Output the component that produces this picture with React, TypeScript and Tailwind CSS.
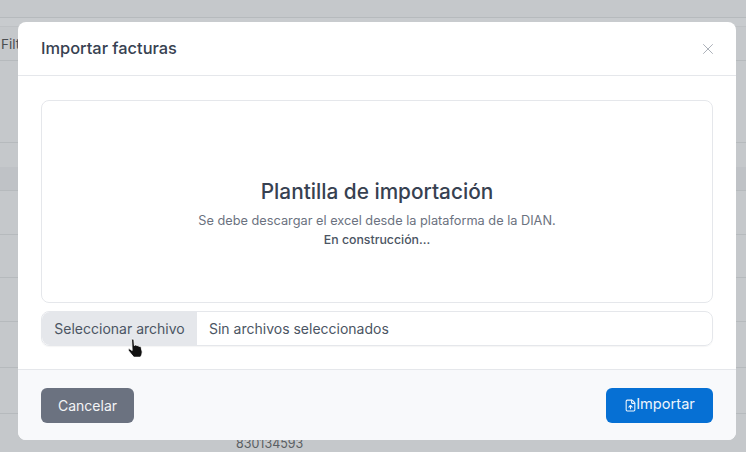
import { FileUp, X } from "lucide-react";

const rows = [
  { h: 18 },
  { h: 9, faint: true },
  { h: 34, label: "Filtros" },
  { h: 82 },
  { h: 48, shaded: true },
  { h: 44 },
  { h: 43 },
  { h: 44 },
  { h: 46 },
  { h: 46 },
];

function HandCursor() {
  return (
    <svg width="17" height="19" viewBox="1 0 14 17" className="absolute left-[85px] top-[26px]">
      <path
        d="M4.500 1.800c0-1.200 2-1.200 2.100 0l.4 5 .5-.4c.9-.5 1.600-.1 1.800.6.800-.5 1.600-.2 1.800.6.800-.4 1.700-.1 1.900.7l.9 3.500c.3 2-.5 3.900-1.500 5.400H6.500L1.800 11.500c-.9-1.100.1-2.300 1.300-1.600L5 11.200z"
        fill="#111"
        stroke="#fff"
        strokeWidth="0.8"
        strokeLinejoin="round"
      />
    </svg>
  );
}

export default function App() {
  return (
    <div className="relative h-[452px] w-[746px] overflow-hidden bg-[#c5c8cb] font-['Inter',sans-serif]">
      <div className="flex flex-col">
        {rows.map((r, i) => (
          <div
            key={i}
            style={{ height: r.h }}
            className={`border-b ${r.faint ? "border-[#bec1c4] bg-[#c8cbce]" : "border-[#b6babd]"}`}
          >
            {r.shaded && <div className="mt-[24px] h-[23px] bg-[#bfc2c6]" />}
            {r.label && <span className="ml-[1px] text-[13.500px] leading-[34px] text-[#4a4e52]">{r.label}</span>}
          </div>
        ))}
        <div className="mt-[23px] pl-[236px] text-[12.500px] leading-[14px] text-[#5b5f63]">830134593</div>
      </div>

      <div className="absolute inset-0 pl-[18px] pt-[22px]">
        <div className="flex h-[418px] w-[718px] flex-col overflow-hidden rounded-lg bg-white">
          <div className="flex h-[54px] items-center justify-between border-b border-[#e5e7eb] px-[23px]">
            <h3 className="text-[16.400px] font-medium text-[#374151]">Importar facturas</h3>
            <X className="mr-[-4px] h-[18px] w-[18px] text-[#a3a8b1]" strokeWidth={1.2} />
          </div>

          <div className="flex flex-1 flex-col gap-2 px-[23px] pt-6">
            <div className="flex h-[203px] flex-col items-center justify-center rounded-lg border border-[#e5e7eb] pt-[25px]">
              <h2 className="text-[20.800px] font-medium leading-6 text-[#374151]">Plantilla de importación</h2>
              <p className="mt-[8px] text-[12.750px] leading-[18px] text-[#6b7280]">
                Se debe descargar el excel desde la plataforma de la DIAN.
              </p>
              <p className="text-[12.300px] font-medium leading-[19px] text-[#4b5563]">En construcción...</p>
            </div>

            <div className="relative flex h-[35px] items-stretch rounded-lg border border-[#e5e7eb] text-[14px] text-[#4b5563] shadow-[0_1px_1px_rgba(0,0,0,0.04)]">
              <span className="flex w-[155px] items-center justify-center rounded-l-lg bg-[#e5e7eb]">
                Seleccionar archivo
              </span>
              <span className="flex items-center pl-3">Sin archivos seleccionados</span>
              <HandCursor />
            </div>
          </div>

          <div className="flex h-[71px] items-center justify-between border-t border-[#e5e7eb] bg-[#f8f9fb] px-[23px]">
            <button className="h-[35px] w-[93px] rounded-md bg-[#6b7280] text-[14px] text-[#f3f4f6]">Cancelar</button>
            <button className="flex h-[35px] w-[107px] items-center justify-center rounded-md bg-[#0670d4] text-[14.600px] text-[#eef5fc]">
              <FileUp className="mr-[-1px] h-[13px] w-[13px]" />
              Importar
            </button>
          </div>
        </div>
      </div>
    </div>
  );
}
